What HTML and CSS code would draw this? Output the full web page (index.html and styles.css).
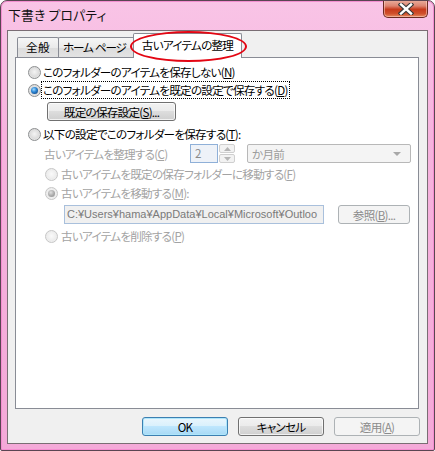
FILE: index.html
```html
<!DOCTYPE html>
<html lang="ja">
<head>
<meta charset="utf-8">
<link rel="stylesheet" href="styles.css">
</head>
<body>
<div class="window">
  <div class="titlebar">
    <span class="title">下書き プロパティ</span>
    <div class="close">
      <svg width="16" height="12" viewBox="0 0 16 12">
        <path d="M3 1.5 L13 10.5 M13 1.5 L3 10.5" stroke="#3a3a3a" stroke-width="4.6" stroke-linecap="square"/>
        <path d="M3 1.5 L13 10.5 M13 1.5 L3 10.5" stroke="#ffffff" stroke-width="2.4" stroke-linecap="square"/>
      </svg>
    </div>
  </div>
  <div class="client">
    <div class="tabs">
      <div class="tab t1">全般</div>
      <div class="tab t2">ホーム ページ</div>
      <div class="tab sel">古いアイテムの整理</div>
      <div class="ellipse"></div>
    </div>
    <div class="panel">
      <div class="row r1"><span class="radio"></span><span class="lbl">このフォルダーのアイテムを保存しない(<u>N</u>)</span></div>
      <div class="row r2"><span class="radio on"></span><span class="lbl focus">このフォルダーのアイテムを既定の設定で保存する(<u>D</u>)</span></div>
      <div class="btnrow"><div class="btn wide">既定の保存設定(<u>S</u>)...</div></div>
      <div class="row r3"><span class="radio"></span><span class="lbl">以下の設定でこのフォルダーを保存する(<u>T</u>):</span></div>
      <div class="row rc">
        <span class="lbl dis clabel">古いアイテムを整理する(<u>C</u>)</span>
        <div class="spinbox">2</div>
        <div class="spin">
          <div class="sp up"><svg width="7" height="4" viewBox="0 0 7 4"><path d="M0 4 L3.5 0 L7 4Z" fill="#b5b5b5"/></svg></div>
          <div class="sp dn"><svg width="7" height="4" viewBox="0 0 7 4"><path d="M0 0 L3.5 4 L7 0Z" fill="#b5b5b5"/></svg></div>
        </div>
        <div class="combo"><span>か月前</span><svg width="8" height="4" viewBox="0 0 8 4"><path d="M0 0 L4 4 L8 0Z" fill="#a8a8a8"/></svg></div>
      </div>
      <div class="row sub rf"><span class="radio dis"></span><span class="lbl dis">古いアイテムを既定の保存フォルダーに移動する(<u>F</u>)</span></div>
      <div class="row sub rm"><span class="radio dis on"></span><span class="lbl dis">古いアイテムを移動する(<u>M</u>):</span></div>
      <div class="pathrow">
        <div class="path">C:¥Users¥hama¥AppData¥Local¥Microsoft¥Outloo</div>
        <div class="btn disabled browse">参照(<u>B</u>)...</div>
      </div>
      <div class="row sub rp"><span class="radio dis"></span><span class="lbl dis">古いアイテムを削除する(<u>P</u>)</span></div>
    </div>
    <div class="buttons">
      <div class="btn default">OK</div>
      <div class="btn">キャンセル</div>
      <div class="btn disabled">適用(<u>A</u>)</div>
    </div>
  </div>
</div>
</body>
</html>
```

FILE: styles.css
```css
html, body {
  margin: 0;
  padding: 0;
  background: #ffffff;
}
body {
  width: 435px;
  height: 451px;
  overflow: hidden;
  font-family: "Noto Sans CJK JP", "Noto Sans", sans-serif;
  font-size: 11.6px;
  letter-spacing: -0.75px;
  font-feature-settings: "palt";
  color: #000;
}
u { text-decoration: underline; text-underline-offset: 1px; }

.window {
  box-sizing: border-box;
  width: 435px;
  height: 451px;
  border: 1px solid #5a4552;
  border-radius: 7px 7px 2px 2px;
  background: linear-gradient(180deg, #f9c4e6 0%, #f6b3de 30%, #f4a9d8 100%);
  box-shadow: inset 0 0 0 1px #f48ed0;
  display: flex;
  flex-direction: column;
  overflow: hidden;
}
.titlebar {
  height: 29px;
  display: flex;
  justify-content: space-between;
  align-items: flex-start;
}
.title {
  padding: 6px 0 0 7px;
  line-height: 15px;
  font-size: 12.8px;
  letter-spacing: 0.2px;
  color: #111;
}
.close {
  width: 45px;
  height: 18px;
  margin-right: 6px;
  margin-top: -1px;
  box-sizing: border-box;
  border: 1px solid #6a2a22;
  border-top: none;
  border-radius: 0 0 5px 5px;
  background: linear-gradient(180deg, #eab0a0 0%, #dd8470 35%, #c73a1c 55%, #d0502c 80%, #e58a60 100%);
  box-shadow: inset 0 0 0 1px rgba(255,220,210,0.5);
  display: flex;
  align-items: center;
  justify-content: center;
}
.client {
  margin: 0 6px 6px 6px;
  flex: 1;
  box-sizing: border-box;
  border: 1px solid #7a6d74;
  background: #f0f0f0;
  display: flex;
  flex-direction: column;
}
.tabs {
  position: relative;
  height: 26px;
  display: flex;
  align-items: flex-end;
  padding-left: 9px;
  z-index: 2;
}
.tab {
  box-sizing: border-box;
  height: 20px;
  border: 1px solid #898c95;
  border-bottom: none;
  background: linear-gradient(180deg, #f6f6f6 0%, #eaeaea 50%, #dcdcdc 51%, #e3e3e3 100%);
  border-radius: 2px 2px 0 0;
  line-height: 19px;
  text-align: center;
  white-space: nowrap;
  flex: none;
}
.t1 { width: 42px; letter-spacing: 0.5px; }
.t2 { width: 78px; margin-left: -1px; text-align: left; padding-left: 4px; letter-spacing: -1.2px; word-spacing: 1px; }
.sel {
  width: 109px;
  height: 25px;
  margin-left: -3px;
  margin-bottom: -1px;
  background: #ffffff;
  position: relative;
  z-index: 2;
  line-height: 22px;
}
.ellipse {
  position: absolute;
  left: 122px;
  top: 0;
  width: 117px;
  height: 31px;
  box-sizing: border-box;
  border: 2px solid #e30613;
  border-radius: 50%;
  z-index: 3;
}
.panel {
  box-sizing: border-box;
  height: 352px;
  margin: 0 8px 0 7px;
  border: 1px solid #898c95;
  background: #ffffff;
  padding: 5px 0 0 12px;
  position: relative;
  z-index: 1;
}
.row {
  height: 18px;
  display: flex;
  align-items: center;
  white-space: nowrap;
}
.lbl { line-height: 16px; margin-left: 2px; }
.lbl.dis { color: #a3a3a3; }
.focus { outline: 1px dotted #000; outline-offset: 0px; padding: 0 1px; margin-left: 1px; }
.sub { padding-left: 17px; }
.sub .lbl { margin-left: 3px; }
.r3 { margin-top: 4px; }
.rc { height: 19px; margin-top: 1px; padding-left: 16px; }
.rf { margin-top: 2px; }
.rm { margin-top: 1px; }
.rp { margin-top: 3px; }

.radio {
  width: 13px;
  height: 13px;
  box-sizing: border-box;
  border-radius: 50%;
  border: 1px solid #8c8e90;
  background: radial-gradient(circle at 50% 45%, #f4f4f4 0%, #dcdcdc 55%, #f8f8f8 100%);
  position: relative;
  flex: none;
}
.radio.on::after {
  content: "";
  position: absolute;
  left: 2px;
  top: 2px;
  width: 7px;
  height: 7px;
  border-radius: 50%;
  background: radial-gradient(circle at 40% 35%, #a6dcff 0%, #2f8ad8 40%, #134e8f 80%, #0c2f5a 100%);
}
.radio.dis {
  border-color: #c6c6c6;
  background: radial-gradient(circle at 50% 45%, #fafafa 0%, #ececec 60%, #f8f8f8 100%);
}
.radio.dis.on::after {
  background: radial-gradient(circle at 40% 35%, #e0e0e0 0%, #a9a9a9 55%, #8f8f8f 100%);
}

.btnrow {
  margin-top: 3px;
  padding-left: 19px;
  display: flex;
}
.btn {
  box-sizing: border-box;
  height: 19px;
  border: 1px solid #707070;
  border-radius: 3px;
  background: linear-gradient(180deg, #f2f2f2 0%, #ebebeb 49%, #dddddd 50%, #cfcfcf 100%);
  box-shadow: inset 0 0 0 1px rgba(255,255,255,0.7);
  display: flex;
  align-items: center;
  justify-content: center;
  line-height: 16px;
  white-space: nowrap;
  flex: none;
}
.wide { width: 129px; }
.btn.disabled {
  border-color: #adb2b5;
  background: #f4f4f4;
  color: #8b8b8b;
  box-shadow: none;
}
.btn.default {
  border-color: #3c7fb1;
  background: linear-gradient(180deg, #eaf6fd 0%, #d9f0fc 49%, #bee6fd 50%, #a7d9f5 100%);
  box-shadow: inset 0 0 0 1px #aee6fb;
}

.clabel { width: 146px; margin-left: 0; flex: none; }
.spinbox {
  box-sizing: border-box;
  width: 28px;
  height: 19px;
  border: 1px solid #8fb0d8;
  background: #eef2f8;
  color: #8a8a8a;
  padding-left: 4px;
  line-height: 17px;
  flex: none;
}
.spin {
  margin-left: 1px;
  width: 16px;
  height: 19px;
  display: flex;
  flex-direction: column;
  gap: 1px;
  flex: none;
}
.sp {
  flex: 1;
  box-sizing: border-box;
  border: 1px solid #cfcfcf;
  border-radius: 2px;
  background: #f2f2f2;
  display: flex;
  align-items: center;
  justify-content: center;
}
.combo {
  box-sizing: border-box;
  margin-left: 12px;
  width: 164px;
  height: 19px;
  border: 1px solid #b8b8b8;
  border-radius: 2px;
  background: #f4f4f4;
  color: #9c9c9c;
  display: flex;
  align-items: center;
  justify-content: space-between;
  padding: 0 9px 0 4px;
  flex: none;
}
.pathrow {
  margin-top: 3px;
  padding-left: 36px;
  display: flex;
  height: 19px;
}
.path {
  box-sizing: border-box;
  width: 260px;
  height: 19px;
  border: 1px solid #a9c0dc;
  background: #f0f0f0;
  color: #7a7a7a;
  padding-left: 2px;
  font-family: "Liberation Sans", "Noto Sans CJK JP", sans-serif;
  font-size: 11px;
  letter-spacing: 0;
  line-height: 17px;
  white-space: nowrap;
  overflow: hidden;
  flex: none;
}
.browse { margin-left: 14px; width: 72px; }

.buttons {
  margin-top: 8px;
  display: flex;
  justify-content: flex-end;
  gap: 10px;
  padding-right: 7px;
}
.buttons .btn { width: 86px; }
```
